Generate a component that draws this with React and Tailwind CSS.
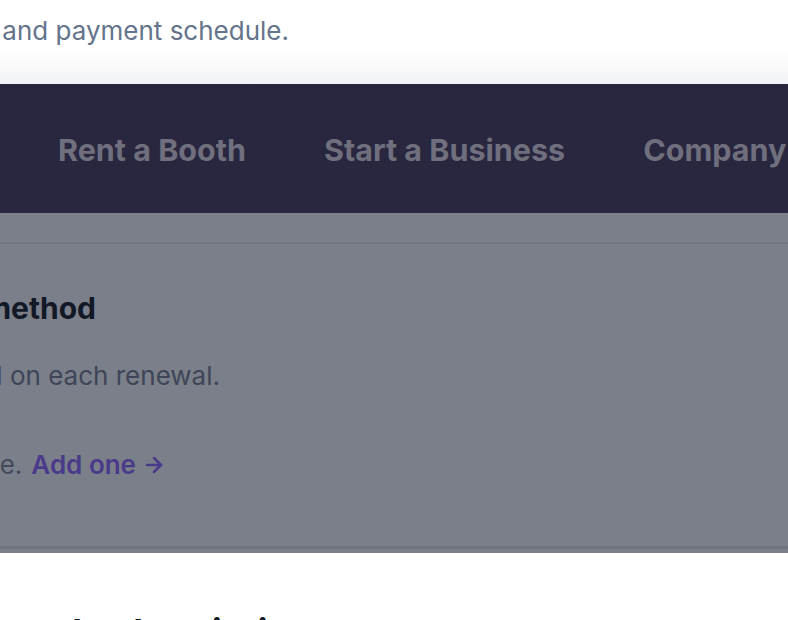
import { ArrowRight } from 'lucide-react';

const navLinks = ['Book a Tour', 'Rent a Booth', 'Start a Business', 'Company'];

// The page column begins left of the viewport, so each line is pinned by its
// right edge and the start of the text runs off the left side.
const Line = ({ end, className = '', children }) => (
  <div className={`flex justify-end whitespace-nowrap ${className}`} style={{ width: end }}>
    {children}
  </div>
);

export default function App() {
  return (
    <div className="h-[620px] w-[788px] overflow-hidden bg-white font-['Inter','Noto_Sans',sans-serif]">
      <header className="h-[84px] bg-gradient-to-b from-white from-60% to-[#f2f3f5] pt-[14px]">
        <Line end={289} className="text-[26px] leading-[34px] text-[#64748b]">
          Choose your plan, billing cycle and payment schedule.
        </Line>
      </header>

      <nav className="flex h-[129px] items-center gap-[78px] whitespace-nowrap bg-[#29273f] pl-[58px] pt-[3px]">
        <span className="-ml-[270px] w-[192px] text-[30.5px] font-bold text-[#6f6f7e]">{navLinks[0]}</span>
        {navLinks.slice(1).map((link) => (
          <span key={link} className="text-[30.5px] font-bold text-[#6f6f7e]">
            {link}
          </span>
        ))}
      </nav>

      <section className="h-[340px] bg-[#7b7f89] pt-[29px]">
        <div className="h-[2px] bg-[#737781]" />
        <div className="pt-[46px]">
          <Line end={96} className="text-[30px] font-bold leading-[36px] text-[#131827]">
            Payment method
          </Line>
          <Line end={220} className="mt-[34px] text-[26px] leading-[32px] text-[#3e4558]">
            Your saved card will be billed in full on each renewal.
          </Line>
          <Line end={166} className="mt-[57px] items-center text-[26px] leading-[32px] text-[#434a5b]">
            No card on file.
            <a className="ml-[9px] flex items-center gap-[6px] font-semibold text-[#4a3a8a]">
              Add one
              <ArrowRight size={24} strokeWidth={2.5} />
            </a>
          </Line>
        </div>
        <div className="mt-[65px] h-[3px] bg-[#70747e]" />
      </section>

      <section className="pt-[59px]">
        <Line end={312} className="text-[36px] font-bold leading-[40px] text-[#131827]">
          Cancel subscription
        </Line>
      </section>
    </div>
  );
}
